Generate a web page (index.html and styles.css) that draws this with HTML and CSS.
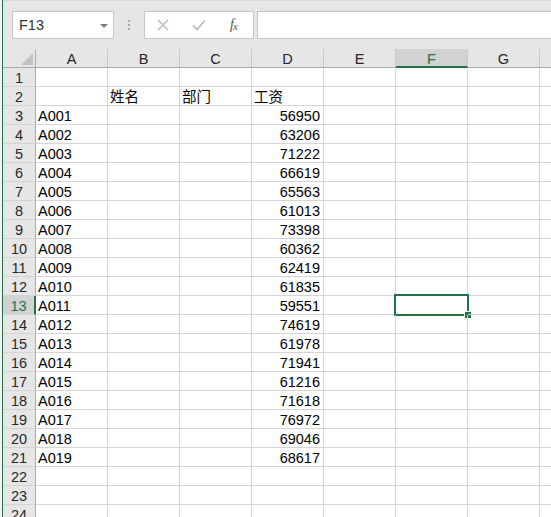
FILE: index.html
```html
<!DOCTYPE html>
<html lang="zh">
<head>
<meta charset="utf-8">
<title>Sheet</title>
<link rel="stylesheet" href="styles.css">
</head>
<body>
<div class="app">
  <div class="fbar">
    <div class="namebox"><span>F13</span><span class="arrow"></span></div>
    <div class="dots"><i></i><i></i><i></i></div>
    <div class="fbtns">
      <svg class="ico-x" width="12" height="12" viewBox="0 0 12 12"><path d="M1 1L11 11M11 1L1 11" stroke="#bdbdbd" stroke-width="1.6" fill="none"/></svg>
      <svg class="ico-ok" width="14" height="12" viewBox="0 0 14 12"><path d="M1 6.5L5 10.5L13 1.5" stroke="#bdbdbd" stroke-width="1.8" fill="none"/></svg>
      <span class="fx">f<sub>x</sub></span>
    </div>
    <div class="finput"></div>
  </div>
  <div class="grid">
    <div class="row hdr">
      <div class="corner"><span class="tri"></span></div>
      <div class="ch">A</div><div class="ch">B</div><div class="ch">C</div><div class="ch">D</div><div class="ch">E</div><div class="ch sel">F</div><div class="ch">G</div><div class="ch last"></div>
    </div>
    <div class="row"><div class="rh">1</div><div class="c"></div><div class="c"></div><div class="c"></div><div class="c"></div><div class="c"></div><div class="c"></div><div class="c"></div><div class="c last"></div></div>
    <div class="row"><div class="rh">2</div><div class="c"></div><div class="c">姓名</div><div class="c">部门</div><div class="c">工资</div><div class="c"></div><div class="c"></div><div class="c"></div><div class="c last"></div></div>
    <div class="row"><div class="rh">3</div><div class="c">A001</div><div class="c"></div><div class="c"></div><div class="c n">56950</div><div class="c"></div><div class="c"></div><div class="c"></div><div class="c last"></div></div>
    <div class="row"><div class="rh">4</div><div class="c">A002</div><div class="c"></div><div class="c"></div><div class="c n">63206</div><div class="c"></div><div class="c"></div><div class="c"></div><div class="c last"></div></div>
    <div class="row"><div class="rh">5</div><div class="c">A003</div><div class="c"></div><div class="c"></div><div class="c n">71222</div><div class="c"></div><div class="c"></div><div class="c"></div><div class="c last"></div></div>
    <div class="row"><div class="rh">6</div><div class="c">A004</div><div class="c"></div><div class="c"></div><div class="c n">66619</div><div class="c"></div><div class="c"></div><div class="c"></div><div class="c last"></div></div>
    <div class="row"><div class="rh">7</div><div class="c">A005</div><div class="c"></div><div class="c"></div><div class="c n">65563</div><div class="c"></div><div class="c"></div><div class="c"></div><div class="c last"></div></div>
    <div class="row"><div class="rh">8</div><div class="c">A006</div><div class="c"></div><div class="c"></div><div class="c n">61013</div><div class="c"></div><div class="c"></div><div class="c"></div><div class="c last"></div></div>
    <div class="row"><div class="rh">9</div><div class="c">A007</div><div class="c"></div><div class="c"></div><div class="c n">73398</div><div class="c"></div><div class="c"></div><div class="c"></div><div class="c last"></div></div>
    <div class="row"><div class="rh">10</div><div class="c">A008</div><div class="c"></div><div class="c"></div><div class="c n">60362</div><div class="c"></div><div class="c"></div><div class="c"></div><div class="c last"></div></div>
    <div class="row"><div class="rh">11</div><div class="c">A009</div><div class="c"></div><div class="c"></div><div class="c n">62419</div><div class="c"></div><div class="c"></div><div class="c"></div><div class="c last"></div></div>
    <div class="row"><div class="rh">12</div><div class="c">A010</div><div class="c"></div><div class="c"></div><div class="c n">61835</div><div class="c"></div><div class="c"></div><div class="c"></div><div class="c last"></div></div>
    <div class="row"><div class="rh sel">13</div><div class="c">A011</div><div class="c"></div><div class="c"></div><div class="c n">59551</div><div class="c"></div><div class="c active"><span class="selbox"></span><span class="handle"></span></div><div class="c"></div><div class="c last"></div></div>
    <div class="row"><div class="rh">14</div><div class="c">A012</div><div class="c"></div><div class="c"></div><div class="c n">74619</div><div class="c"></div><div class="c"></div><div class="c"></div><div class="c last"></div></div>
    <div class="row"><div class="rh">15</div><div class="c">A013</div><div class="c"></div><div class="c"></div><div class="c n">61978</div><div class="c"></div><div class="c"></div><div class="c"></div><div class="c last"></div></div>
    <div class="row"><div class="rh">16</div><div class="c">A014</div><div class="c"></div><div class="c"></div><div class="c n">71941</div><div class="c"></div><div class="c"></div><div class="c"></div><div class="c last"></div></div>
    <div class="row"><div class="rh">17</div><div class="c">A015</div><div class="c"></div><div class="c"></div><div class="c n">61216</div><div class="c"></div><div class="c"></div><div class="c"></div><div class="c last"></div></div>
    <div class="row"><div class="rh">18</div><div class="c">A016</div><div class="c"></div><div class="c"></div><div class="c n">71618</div><div class="c"></div><div class="c"></div><div class="c"></div><div class="c last"></div></div>
    <div class="row"><div class="rh">19</div><div class="c">A017</div><div class="c"></div><div class="c"></div><div class="c n">76972</div><div class="c"></div><div class="c"></div><div class="c"></div><div class="c last"></div></div>
    <div class="row"><div class="rh">20</div><div class="c">A018</div><div class="c"></div><div class="c"></div><div class="c n">69046</div><div class="c"></div><div class="c"></div><div class="c"></div><div class="c last"></div></div>
    <div class="row"><div class="rh">21</div><div class="c">A019</div><div class="c"></div><div class="c"></div><div class="c n">68617</div><div class="c"></div><div class="c"></div><div class="c"></div><div class="c last"></div></div>
    <div class="row"><div class="rh">22</div><div class="c"></div><div class="c"></div><div class="c"></div><div class="c"></div><div class="c"></div><div class="c"></div><div class="c"></div><div class="c last"></div></div>
    <div class="row"><div class="rh">23</div><div class="c"></div><div class="c"></div><div class="c"></div><div class="c"></div><div class="c"></div><div class="c"></div><div class="c"></div><div class="c last"></div></div>
    <div class="row"><div class="rh">24</div><div class="c"></div><div class="c"></div><div class="c"></div><div class="c"></div><div class="c"></div><div class="c"></div><div class="c"></div><div class="c last"></div></div>
  </div>
</div>
</body>
</html>
```
FILE: styles.css
```css
html, body {
  margin: 0;
  padding: 0;
}
body {
  width: 551px;
  height: 517px;
  overflow: hidden;
  background: #f3f3f3;
  font-family: "Liberation Sans", Arial, "Noto Sans CJK SC", sans-serif;
  font-size: 14.5px;
  color: #000;
}
.app {
  margin-left: 2px;
  border-left: 1px solid #217346;
  height: 517px;
  overflow: hidden;
  background: #fff;
}
.fbar {
  height: 49px;
  box-sizing: border-box;
  background: #e6e6e6;
  border-top: 1px solid #d8d8d8;
  padding-top: 10px;
  display: flex;
  align-items: flex-start;
}
.namebox {
  margin-left: 9px;
  width: 102px;
  height: 28px;
  box-sizing: border-box;
  border: 1px solid #c6c6c6;
  background: #fff;
  display: flex;
  align-items: center;
  justify-content: space-between;
  padding: 0 5px 0 6px;
  color: #333;
  font-size: 14.5px;
}
.arrow {
  width: 0;
  height: 0;
  border-left: 4px solid transparent;
  border-right: 4px solid transparent;
  border-top: 4px solid #7a7a7a;
  margin-top: 1px;
}
.dots {
  margin-left: 14px;
  margin-top: 9px;
  width: 2px;
  display: flex;
  flex-direction: column;
  gap: 2px;
}
.dots i {
  display: block;
  width: 2px;
  height: 2px;
  background: #a8a8a8;
}
.fbtns {
  margin-left: 14px;
  width: 110px;
  height: 28px;
  box-sizing: border-box;
  border: 1px solid #c6c6c6;
  background: #fff;
  display: flex;
  align-items: center;
  padding-left: 12px;
}
.ico-x { margin-left: 0; }
.ico-ok { margin-left: 23px; }
.fx {
  margin-left: 24px;
  font-family: "Liberation Serif", "Times New Roman", serif;
  font-style: italic;
  font-size: 14px;
  color: #555;
  line-height: 14px;
}
.fx sub {
  font-size: 11px;
  vertical-align: 0;
  position: relative;
  top: 1px;
  margin-left: -1px;
}
.finput {
  margin-left: 3px;
  flex: 1;
  height: 28px;
  box-sizing: border-box;
  border: 1px solid #c6c6c6;
  border-right: none;
  background: #fff;
}
.grid {
  display: flex;
  flex-direction: column;
}
.row {
  display: flex;
  height: 19px;
  flex: none;
}
.hdr {
  background: #e6e6e6;
}
.corner {
  width: 33px;
  height: 19px;
  box-sizing: border-box;
  border-right: 1px solid #ababab;
  border-bottom: 1px solid #ababab;
  position: relative;
  background: #e6e6e6;
}
.tri {
  position: absolute;
  right: 2px;
  bottom: 2px;
  width: 0;
  height: 0;
  border-left: 12px solid transparent;
  border-bottom: 12px solid #c3c3c3;
}
.ch {
  width: 72px;
  height: 19px;
  box-sizing: border-box;
  border-right: 1px solid #c8c8c8;
  border-bottom: 1px solid #ababab;
  text-align: center;
  line-height: 20px;
  color: #262626;
  flex: none;
}
.ch.sel {
  background: #d2d2d2;
  color: #217346;
  border-bottom: 2px solid #217346;
}
.ch.last {
  flex: 1;
  border-right: none;
}
.rh {
  width: 33px;
  height: 19px;
  box-sizing: border-box;
  border-right: 1px solid #ababab;
  border-bottom: 1px solid #d4d4d4;
  background: #e6e6e6;
  text-align: center;
  line-height: 20px;
  color: #262626;
  flex: none;
}
.rh.sel {
  background: #d2d2d2;
  color: #217346;
  border-right: 2px solid #217346;
}
.c {
  width: 72px;
  height: 19px;
  box-sizing: border-box;
  border-right: 1px solid #d4d4d4;
  border-bottom: 1px solid #d4d4d4;
  padding: 0 3px 0 2px;
  line-height: 20px;
  white-space: nowrap;
  flex: none;
  position: relative;
}
.c.n {
  text-align: right;
}
.c.last {
  flex: 1;
  border-right: none;
}
.selbox {
  position: absolute;
  left: -2px;
  top: -2px;
  width: 75px;
  height: 22px;
  box-sizing: border-box;
  border: 2px solid #217346;
}
.handle {
  position: absolute;
  left: 68px;
  top: 15px;
  width: 6px;
  height: 6px;
  background: #217346;
  border-left: 1px solid #fff;
  border-top: 1px solid #fff;
}
```
